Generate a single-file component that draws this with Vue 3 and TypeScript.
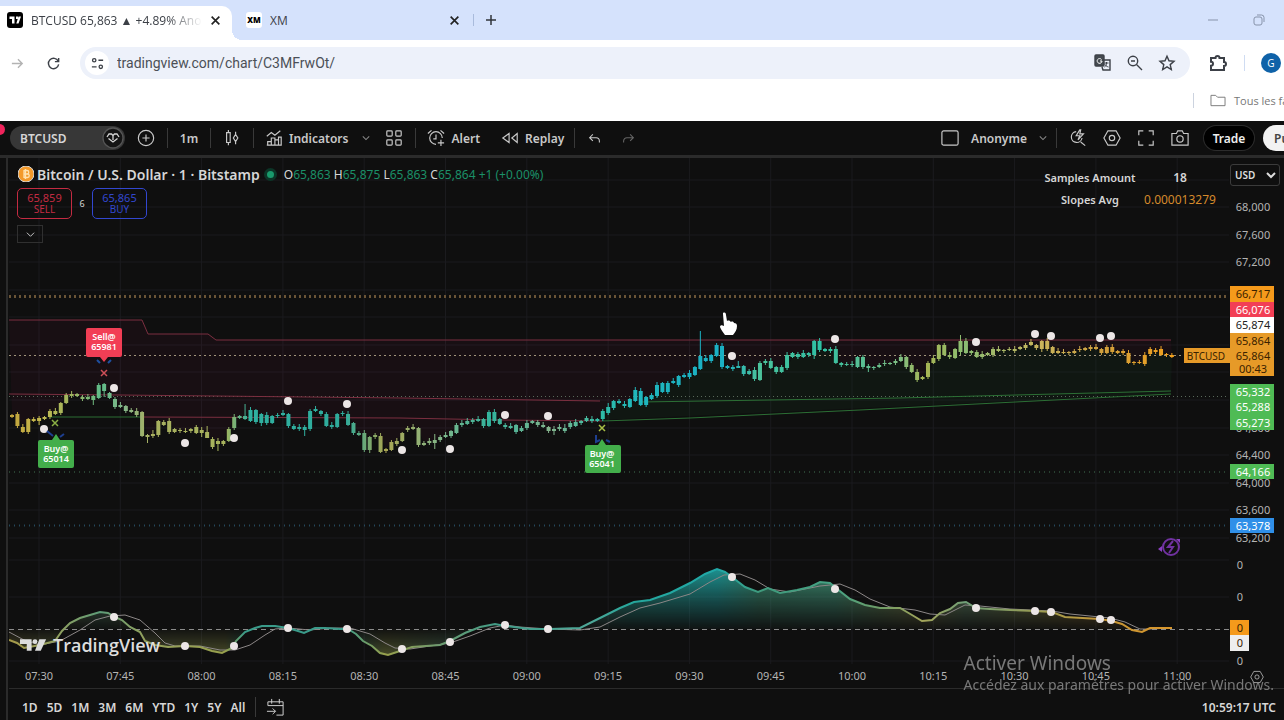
<script setup lang="ts">
import { ref } from 'vue'

type Body = [top: number, bottom: number]

const address = ref('tradingview.com/chart/C3MFrwOt/')
const currency = ref('USD')

const ranges = ['1D', '5D', '1M', '3M', '6M', 'YTD', '1Y', '5Y', 'All']

const hours = [
  '07:30', '07:45', '08:00', '08:15', '08:30', '08:45', '09:00', '09:15',
  '09:30', '09:45', '10:00', '10:15', '10:30', '10:45', '11:00',
].map((label, i) => ({ label, x: 39 + i * 81.3 }))

const gridRows = [180, 207, 235, 262, 290, 317, 345, 372, 400, 428, 455, 483, 510, 538, 560, 597, 661]

const prices = [
  { label: '68,000', y: 207 }, { label: '67,600', y: 235 }, { label: '67,200', y: 262 },
  { label: '64,800', y: 428 }, { label: '64,400', y: 455 }, { label: '64,000', y: 483 },
  { label: '63,600', y: 510 }, { label: '63,200', y: 538 },
  { label: '0', y: 565 }, { label: '0', y: 597 }, { label: '0', y: 661 },
]

const tags = [
  { label: '66,717', y: 286, h: 16, fill: '#f59a1b', ink: '#3a2200' },
  { label: '66,076', y: 302, h: 15, fill: '#f23e55', ink: '#fff' },
  { label: '65,874', y: 317, h: 16, fill: '#ffffff', ink: '#222' },
  { label: '65,864', y: 333, h: 15, fill: '#e69a28', ink: '#3a2200' },
  { label: '65,864', y: 348, h: 14, fill: '#e69a28', ink: '#3a2200' },
  { label: '00:43', y: 361, h: 15, fill: '#e69a28', ink: '#3a2200' },
  { label: '65,332', y: 384, h: 15, fill: '#4fbb55', ink: '#fff' },
  { label: '65,288', y: 399, h: 16, fill: '#4fbb55', ink: '#fff' },
  { label: '65,273', y: 415, h: 15, fill: '#4fbb55', ink: '#fff' },
  { label: '64,166', y: 464, h: 15, fill: '#4fbb55', ink: '#fff' },
  { label: '63,378', y: 518, h: 15, fill: '#2f8fe8', ink: '#fff' },
]

const bodies: Body[] = [
  [415, 417], [414, 426], [427, 432], [419, 432], [419, 421], [418, 421], [417, 419], [411, 417], [411, 414], [403, 413],
  [395, 403], [394, 396], [394, 396], [397, 399], [397, 399], [396, 400], [385, 398], [384, 391], [393, 398], [399, 407],
  [405, 407], [406, 411], [410, 412], [411, 415], [412, 436], [435, 437], [434, 436], [421, 435], [422, 425], [421, 432],
  [429, 432], [430, 431], [431, 432], [429, 431], [427, 433], [430, 433], [432, 438], [439, 447], [441, 444], [441, 444],
  [429, 441], [417, 428], [416, 418], [416, 419], [410, 421], [410, 422], [414, 423], [415, 423], [416, 423], [415, 416],
  [413, 415], [414, 426], [426, 429], [427, 429], [427, 430], [411, 429], [409, 411], [411, 414], [414, 426], [425, 427],
  [414, 427], [413, 414], [414, 425], [423, 433], [433, 435], [433, 450], [437, 450], [435, 437], [436, 452], [449, 451],
  [442, 450], [441, 444], [433, 441], [428, 430], [427, 429], [428, 445], [443, 445], [441, 443], [440, 443], [437, 440],
  [435, 437], [431, 436], [425, 433], [423, 425], [421, 424], [420, 422], [419, 421], [419, 426], [412, 426], [412, 421],
  [419, 424], [425, 427], [426, 428], [425, 432], [428, 431], [423, 428], [421, 423], [422, 425], [425, 427], [427, 431],
  [429, 431], [427, 429], [428, 431], [423, 427], [422, 426], [421, 423], [418, 421], [419, 421], [419, 421], [411, 419],
  [407, 413], [401, 408], [401, 403], [404, 406], [399, 407], [390, 401], [391, 405], [397, 405], [395, 399], [385, 396],
  [383, 392], [383, 392], [381, 383], [376, 385], [375, 377], [373, 377], [367, 375], [356, 369], [358, 361], [355, 361],
  [345, 356], [346, 367], [366, 368], [367, 369], [366, 368], [366, 374], [371, 374], [370, 379], [363, 380], [361, 363],
  [361, 368], [367, 372], [367, 372], [355, 368], [353, 357], [354, 357], [353, 357], [353, 355], [341, 355], [341, 350],
  [349, 351], [349, 351], [349, 363], [363, 365], [364, 365], [364, 365], [357, 367], [357, 367], [366, 368], [367, 368],
  [365, 367], [363, 364], [363, 364], [361, 363], [357, 361], [357, 367], [365, 372], [372, 380], [377, 379], [363, 377],
  [358, 363], [345, 359], [345, 355], [355, 357], [349, 358], [341, 352], [341, 353], [351, 353], [352, 357], [354, 357],
  [353, 355], [349, 355], [349, 351], [350, 351], [349, 350], [349, 351], [347, 349], [345, 348], [342, 345], [345, 348],
  [341, 349], [341, 349], [347, 353], [351, 353], [352, 353], [352, 353], [351, 353], [349, 350], [348, 350], [347, 349],
  [347, 349], [349, 353], [347, 353], [347, 352], [351, 353], [351, 353], [353, 363], [362, 363], [362, 363], [355, 364],
  [349, 354], [350, 352], [349, 355], [354, 355], [355, 357],
]

const longWicks: Record<number, Body> = {
  5: [416, 425], 15: [395, 405], 17: [383, 397], 25: [434, 443], 26: [430, 438], 35: [427, 437], 36: [426, 438],
  38: [438, 451], 43: [404, 420], 46: [413, 426], 54: [425, 436], 66: [436, 453], 78: [434, 449], 84: [418, 425],
  100: [426, 435], 102: [424, 433], 110: [403, 415], 115: [387, 402], 127: [331, 370], 134: [361, 368], 138: [361, 381],
  175: [335, 355], 158: [364, 372], 190: [340, 352], 193: [348, 354], 210: [347, 356], 148: [340, 359],
}

const candles = bodies.map(([top, bottom], i) => {
  const [high, low] = longWicks[i] ?? [top - 1 - (i % 3), bottom + 1 + (i % 2)]
  return { x: 12 + i * 5.42, top, height: bottom - top, high, low }
})

const momentum =
  '9,640 17,643 24,648 40,645 55,641 62,631 70,623 80,618 90,615 100,612 108,613 115,617 122,620 130,627 140,632 145,641 155,645 168,647 185,646 200,647 212,651 222,653 232,648 236,641 245,632 255,628 262,626 275,626 288,628 298,631 304,633 315,628 325,628 340,629 348,629 356,634 363,641 372,646 380,653 388,655 400,651 412,647 440,645 450,641 465,633 480,627 495,624 505,626 530,629 550,629 580,628 600,618 620,608 634,602 650,600 670,593 690,583 705,574 717,569 725,572 732,577 745,587 758,592 768,588 780,593 797,590 810,587 820,582 830,583 836,588 850,599 865,605 880,608 900,608 912,615 922,621 932,620 940,613 950,609 958,603 966,602 976,608 990,609 1010,610 1035,611 1052,612 1065,617 1100,619 1112,621 1122,624 1132,630 1142,632 1150,628 1172,628'
const signal =
  '9,632 24,640 40,645 60,641 80,630 95,620 110,616 125,615 140,620 155,633 165,643 175,646 200,646 220,650 235,650 250,645 265,635 275,629 288,628 310,630 330,628 350,628 370,634 385,643 395,648 410,649 450,643 470,636 490,628 505,625 520,627 548,629 580,630 600,627 620,617 640,608 660,603 690,594 710,582 724,575 740,574 755,580 770,589 790,592 820,586 840,584 855,590 870,599 890,607 915,610 930,614 945,615 955,610 965,605 980,606 1010,609 1052,611 1070,614 1110,618 1125,622 1140,629 1150,629 1172,628'

const priceDots = [
  [44, 429], [114, 388], [185, 443], [234, 438], [288, 401], [347, 404], [402, 450], [450, 449], [505, 415], [548, 416],
  [732, 356], [835, 339], [976, 342], [1035, 334], [1051, 336], [1100, 338], [1111, 336],
]
const momentumDots = [
  [114, 617], [185, 646], [234, 646], [288, 628], [347, 629], [402, 649], [450, 642], [505, 625], [548, 629], [732, 577],
  [835, 589], [976, 608], [1035, 611], [1051, 612], [1100, 619], [1111, 620],
]

const toStops = (pairs: [number, string][]) => pairs.map(([x, color]) => ({ offset: (x - 12) / 1160, color }))

const candleHues = toStops([
  [12, '#c2a43c'], [40, '#c4b84e'], [75, '#9bb562'], [100, '#5fbb88'], [125, '#86b688'], [150, '#a9b060'], [225, '#a7b35c'],
  [250, '#2fb0a0'], [345, '#2fac9c'], [385, '#a9a552'], [440, '#84b789'], [490, '#31b39d'], [550, '#86b48c'], [600, '#2fbba6'],
  [640, '#1fb6bd'], [722, '#1aafc4'], [760, '#4cc29b'], [820, '#2fc0a4'], [900, '#7fbf83'], [925, '#a8b453'], [965, '#8abd72'],
  [1040, '#c9b45c'], [1100, '#cfa03e'], [1172, '#f2a01d'],
])
const momentumHues = toStops([
  [12, '#a59a4a'], [60, '#8fa060'], [100, '#5d9c78'], [145, '#93a05c'], [225, '#98a04c'], [245, '#3a9c8a'], [345, '#3a9a8a'],
  [385, '#98a04c'], [440, '#6d9c70'], [500, '#3f9c88'], [590, '#4fa898'], [630, '#26a79c'], [717, '#20a9a8'], [760, '#3f9a7c'],
  [835, '#46a384'], [880, '#6f9c66'], [925, '#a5a55a'], [965, '#6f9f78'], [1040, '#9c9c50'], [1100, '#c49638'], [1172, '#d9962a'],
])
</script>

<template>
  <div class="window">
    <header class="browser">
      <div class="tabs">
        <div class="tab active">
          <svg class="favicon" viewBox="0 0 16 16" aria-hidden="true">
            <rect width="16" height="16" rx="3" fill="#000" />
            <path d="M2.5 4.5h5v7H5V7H2.5zM9 4.5h2V7H9zM11.5 4.5H14l-2.5 7H9.3z" fill="#fff" />
          </svg>
          <span class="tab-title">BTCUSD 65,863 ▲ +4.89% Anonyme</span>
          <button class="tab-close" aria-label="Close tab">
            <svg viewBox="0 0 10 10"><path d="M1.5 1.5l7 7M8.5 1.5l-7 7" /></svg>
          </button>
        </div>
        <div class="tab idle">
          <span class="xm-icon">XM</span>
          <span class="tab-title">XM</span>
          <button class="tab-close" aria-label="Close tab">
            <svg viewBox="0 0 10 10"><path d="M1.5 1.5l7 7M8.5 1.5l-7 7" /></svg>
          </button>
        </div>
        <button class="new-tab" aria-label="New tab">
          <svg viewBox="0 0 12 12"><path d="M6 1v10M1 6h10" /></svg>
        </button>
        <div class="window-buttons">
          <button aria-label="Minimize"><svg viewBox="0 0 12 12"><path d="M1 6h10" /></svg></button>
          <button aria-label="Restore">
            <svg viewBox="0 0 12 12"><rect x="1" y="3" width="8" height="8" rx="2" /><path d="M4 1h4.5a2.500 2.500 0 0 1 2.500 2.500V8" /></svg>
          </button>
        </div>
      </div>

      <div class="address-row">
        <button class="nav faint" aria-label="Forward">
          <svg viewBox="0 0 16 16"><path d="M2 8h11M8.500 3.500L13 8l-4.500 4.500" /></svg>
        </button>
        <button class="nav" aria-label="Reload">
          <svg viewBox="0 0 16 16"><path d="M13 5.500A5.500 5.500 0 1 0 13.500 9M13.500 2v4h-4" /></svg>
        </button>
        <div class="omnibox">
          <button class="site-info" aria-label="Site information">
            <svg viewBox="0 0 16 16"><circle cx="4.500" cy="4.500" r="1.800" /><path d="M9 4.500h5M2 11.500h5" /><circle cx="11.500" cy="11.500" r="1.800" /></svg>
          </button>
          <input v-model="address" class="url" type="text" aria-label="Address" />
          <button aria-label="Translate">
            <svg viewBox="0 0 18 18"><rect x="1" y="1" width="9" height="11" rx="1" fill="#444a50" /><path d="M8 6h8v10H9l-1-3" /><path d="M10.500 9h4M12.500 8v1c0 2-1 3.500-2 4M11 10.500c1 1.500 2 2 3.500 2.500" stroke-width="1" /><path d="M7.500 5.500A2.400 2.400 0 1 0 8 7H6" stroke="#fff" stroke-width="1" /></svg>
          </button>
          <button aria-label="Zoom">
            <svg viewBox="0 0 18 18"><circle cx="7" cy="7" r="4.700" /><path d="M10.500 10.500l5.500 5.500M5 7h4" /></svg>
          </button>
          <button aria-label="Bookmark this tab">
            <svg viewBox="0 0 18 18"><path d="M9 2.200l2 4.600 5 .5-3.800 3.300 1.100 4.900L9 12.900l-4.300 2.600 1.100-4.900L2 7.300l5-.5z" /></svg>
          </button>
        </div>
        <button class="puzzle" aria-label="Extensions">
          <svg viewBox="0 0 18 18"><path d="M2 4h4.500a2 2 0 0 1 4 0H15v4a2 2 0 0 1 0 4v4H2v-4.200a2 2 0 0 0 0-4z" /></svg>
        </button>
        <span class="thin-rule"></span>
        <button class="avatar" aria-label="Profile">G</button>
      </div>

      <div class="bookmarks">
        <a href="#bookmarks" class="all-bookmarks">
          <svg viewBox="0 0 18 16"><path d="M1.500 2.500h5l2 2h8v9h-15z" /></svg>
          <span>Tous les favoris</span>
        </a>
      </div>
    </header>

    <main class="terminal">
      <nav class="toolbar" aria-label="Chart tools">
        <span class="alert-dot"></span>
        <button class="symbol">
          <span>BTCUSD</span>
          <svg viewBox="0 0 22 22"><circle cx="11" cy="11" r="10" fill="#151515" stroke="#555" /><path d="M5 10l2-3h2.500L11 8.500 12.500 7H15l2 3M6.500 11.500L11 15l4.500-3.500M11 9v4" /></svg>
        </button>
        <button class="tool plus" aria-label="Add symbol">
          <svg viewBox="0 0 20 20"><circle cx="10" cy="10" r="8.500" /><path d="M10 6v8M6 10h8" /></svg>
        </button>
        <i class="rule"></i>
        <button class="tool interval">1m</button>
        <i class="rule"></i>
        <button class="tool style" aria-label="Candles">
          <svg viewBox="0 0 20 20"><path d="M6 1v3M6 15v3M14 3v3M14 14v3M4 4h4v11H4zM16.500 10L14 14l-2.500-4L14 6z" /></svg>
        </button>
        <i class="rule"></i>
        <button class="tool labelled">
          <svg viewBox="0 0 20 20"><path d="M2 8l5-4 4 3 6-5M3 18v-4h4v4zM7 18v-8h4v8M11 18v-6h4v6M15 18V9h3v9H2" /></svg>
          <span>Indicators</span>
        </button>
        <button class="tool chevron" aria-label="Favourite indicators">
          <svg viewBox="0 0 10 10"><path d="M1 3l4 4 4-4" /></svg>
        </button>
        <button class="tool templates" aria-label="Templates">
          <svg viewBox="0 0 20 20"><rect x="2" y="2" width="6" height="6" rx="1" /><rect x="12" y="2" width="6" height="6" rx="1" /><rect x="2" y="12" width="6" height="6" rx="1" /><rect x="12" y="12" width="6" height="6" rx="1" /></svg>
        </button>
        <i class="rule"></i>
        <button class="tool labelled">
          <svg viewBox="0 0 20 20"><path d="M1 5l4-3.500M15 1.500L19 5M17 10a7 7 0 1 0-7 7M10 6v5H7M12 15.500h7M15.500 12v7" /></svg>
          <span>Alert</span>
        </button>
        <button class="tool labelled">
          <svg viewBox="0 0 20 20"><path d="M9 5v10l-7-5zM18 5v10l-6-5z" /></svg>
          <span>Replay</span>
        </button>
        <i class="rule"></i>
        <button class="tool undo" aria-label="Undo">
          <svg viewBox="0 0 16 16"><path d="M6 3L2 7l4 4M2 7h8a4 4 0 0 1 4 4v2" /></svg>
        </button>
        <button class="tool redo" aria-label="Redo">
          <svg viewBox="0 0 16 16"><path d="M10 3l4 4-4 4M14 7H6a4 4 0 0 0-4 4v2" /></svg>
        </button>

        <div class="right-tools">
          <button class="tool layout">
            <svg viewBox="0 0 20 20"><rect x="1" y="2" width="18" height="16" rx="2" /></svg>
            <span>Anonyme</span>
            <svg class="mini" viewBox="0 0 10 10"><path d="M1 3l4 4 4-4" /></svg>
          </button>
          <i class="rule"></i>
          <button class="tool round" aria-label="Quick search">
            <svg viewBox="0 0 20 20"><path d="M8 3a6 6 0 1 0 6.500 7M13 14.500l5 4M12 1L8 7.500h4L10 12l6-6.500h-4l1-4.500z" /></svg>
          </button>
          <button class="tool round" aria-label="Settings">
            <svg viewBox="0 0 20 20"><path d="M5.500 2h9L19 10l-4.500 8h-9L1 10z" /><circle cx="10" cy="10" r="3" /></svg>
          </button>
          <button class="tool round" aria-label="Fullscreen">
            <svg viewBox="0 0 20 20"><path d="M2 7V2h5M13 2h5v5M18 13v5h-5M7 18H2v-5" /></svg>
          </button>
          <button class="tool round" aria-label="Snapshot">
            <svg viewBox="0 0 20 20"><path d="M1 5h5l1.500-3h5L14 5h5v13H1z" /><circle cx="10" cy="11" r="3.500" /></svg>
          </button>
          <button class="trade">Trade</button>
          <button class="publish">Publish</button>
        </div>
      </nav>

      <section class="chart">
        <svg class="plot" viewBox="9 158 1275 530" role="img" aria-label="Bitcoin price chart with momentum pane">
          <defs>
            <linearGradient id="hue" gradientUnits="userSpaceOnUse" x1="12" y1="0" x2="1172" y2="0">
              <stop v-for="(s, i) in candleHues" :key="i" :offset="s.offset" :stop-color="s.color" />
            </linearGradient>
            <linearGradient id="wave" gradientUnits="userSpaceOnUse" x1="12" y1="0" x2="1172" y2="0">
              <stop v-for="(s, i) in momentumHues" :key="i" :offset="s.offset" :stop-color="s.color" />
            </linearGradient>
            <linearGradient id="fade" gradientUnits="userSpaceOnUse" x1="0" y1="565" x2="0" y2="658">
              <stop offset="0" stop-color="#fff" stop-opacity="0.9" />
              <stop offset="0.4" stop-color="#fff" stop-opacity="0.36" />
              <stop offset="0.69" stop-color="#fff" stop-opacity="0.03" />
              <stop offset="1" stop-color="#fff" stop-opacity="0.45" />
            </linearGradient>
            <mask id="glow" maskUnits="userSpaceOnUse" x="9" y="560" width="1170" height="100">
              <rect x="9" y="560" width="1170" height="100" fill="url(#fade)" />
            </mask>
          </defs>

          <g class="grid">
            <line v-for="h in hours" :key="h.label" :x1="h.x" :x2="h.x" y1="158" y2="664" />
            <line v-for="y in gridRows" :key="y" x1="9" x2="1229" :y1="y" :y2="y" />
          </g>

          <polygon class="red-cloud" :points="`9,320 142,320 148,334 208,334 216,340 1171,340 ${candles.slice().reverse().map((c) => `${c.x},${c.top}`).join(' ')}`" />
          <polygon class="green-cloud" :points="`${candles.slice(109).map((c) => `${c.x},${c.top + c.height}`).join(' ')} 1171,394 602,420`" />

          <g class="dotted">
            <line x1="9" x2="1229" y1="296.500" y2="296.500" stroke="#6a5436" stroke-width="3" stroke-dasharray="2 3" />
            <line x1="9" x2="1183" y1="355.500" y2="355.500" stroke="#a0937a" stroke-dasharray="2 3" />
            <line x1="9" x2="1229" y1="396.500" y2="396.500" stroke="#59695a" stroke-dasharray="1 3" />
            <line x1="9" x2="1229" y1="472" y2="472" stroke="#284030" stroke-width="2" stroke-dasharray="1 4" />
            <line x1="9" x2="1229" y1="525.500" y2="525.500" stroke="#25485a" stroke-width="2" stroke-dasharray="1 4" />
          </g>

          <g class="levels">
            <polyline class="red" points="9,320 142,320 148,334 208,334 216,340 1171,340" />
            <polyline class="red" points="9,394 120,395 400,398 600,401" />
            <polyline class="red" points="143,417 400,418 500,420 602,421" />
            <polyline class="green" points="50,417 143,417" />
            <polyline class="green" points="640,402 900,398 1171,391" />
            <polyline class="green" points="602,421 690,418 860,410 1171,394" />
          </g>

          <g fill="url(#hue)">
            <g v-for="(c, i) in candles" :key="i">
              <rect :x="c.x - 0.5" :y="c.high" width="1" :height="c.low - c.high" />
              <rect :x="c.x - 2" :y="c.top" width="4" :height="c.height" />
            </g>
          </g>

          <circle v-for="([x, y], i) in priceDots" :key="i" :cx="x" :cy="y" r="4" class="dot" />

          <g class="marker">
            <path d="M88 328h32a2 2 0 0 1 2 2v25a2 2 0 0 1-2 2h-12l-4 5-4-5H88a2 2 0 0 1-2-2v-25a2 2 0 0 1 2-2z" fill="#f23e55" />
            <path d="M97 360l3 3M111 360l-3 3" stroke="#1e4fa0" stroke-width="2" />
            <path d="M101 370l6 6M107 370l-6 6" stroke="#cf5058" stroke-width="1.500" />
            <text x="104" y="340">Sell@</text>
            <text x="104" y="350">65981</text>
          </g>
          <g class="marker">
            <path d="M40 440h12l4-6 4 6h12a2 2 0 0 1 2 2v24a2 2 0 0 1-2 2H40a2 2 0 0 1-2-2v-24a2 2 0 0 1 2-2z" fill="#43ae4b" />
            <path d="M47 431l6 5M64 434l-4 3" stroke="#1e3f90" stroke-width="2" />
            <path d="M52 420l6 6M58 420l-6 6" stroke="#8ab045" stroke-width="1.500" />
            <text x="56" y="452">Buy@</text>
            <text x="56" y="462">65014</text>
          </g>
          <g class="marker">
            <path d="M587 445h11l4-6 4 6h13a2 2 0 0 1 2 2v24a2 2 0 0 1-2 2h-32a2 2 0 0 1-2-2v-24a2 2 0 0 1 2-2z" fill="#43ae4b" />
            <path d="M596 435v7l4-2M606 440l4 2" stroke="#1e3f90" stroke-width="2" />
            <path d="M599 425l6 6M605 425l-6 6" stroke="#a9c045" stroke-width="1.500" />
            <text x="602" y="457">Buy@</text>
            <text x="602" y="467">65041</text>
          </g>

          <polygon :points="`9,629 ${momentum} 1172,629`" fill="url(#wave)" mask="url(#glow)" />
          <line class="zero" x1="9" x2="1229" y1="629.500" y2="629.500" />
          <polyline class="signal" :points="signal" />
          <polyline class="momentum" :points="momentum" />
          <circle v-for="([x, y], i) in momentumDots" :key="'m' + i" :cx="x" :cy="y" r="4" class="dot" />

          <g class="spark">
            <circle cx="1171" cy="547" r="8" />
            <path d="M1173 541l-5 6h5l-4 6" />
            <path d="M1158 549l4-3v6zM1176 539h4v4z" class="solid" />
          </g>

          <g class="scale">
            <text v-for="(p, i) in prices" :key="i" :x="p.label === '0' ? 1240 : 1253" :y="p.y + 4">{{ p.label }}</text>
            <g v-for="(t, i) in tags" :key="'t' + i">
              <rect x="1230" :y="t.y" width="44" :height="t.h" :fill="t.fill" />
              <text x="1253" :y="t.y + 12" :style="{ fill: t.ink }">{{ t.label }}</text>
            </g>
            <rect x="1184" y="348" width="46" height="15" fill="#e69a28" />
            <text x="1206" y="360" class="dark small">BTCUSD</text>
            <rect x="1230" y="620" width="19" height="15" fill="#f59a1b" />
            <text x="1240" y="632" class="dark">0</text>
            <rect x="1230" y="635" width="19" height="16" fill="#eee" />
            <text x="1240" y="647" class="dark">0</text>
            <text v-for="h in hours" :key="h.label" :x="h.x" y="680">{{ h.label }}</text>
          </g>

          <path class="hand" d="M723 313c2-1 3 0 3 2l1 6c2-1 3 0 4 1 1-1 3 0 3 1 2 0 3 1 3 3 0 4-2 6-4 9h-8c-2-3-4-5-5-8 0-2 2-2 4-1l-1-12z" />
        </svg>

        <div class="legend">
          <svg class="coin" viewBox="0 0 16 16" aria-hidden="true"><circle cx="8" cy="8" r="8" fill="#f39a2b" /><path d="M6 4v8M6 4.500h3a1.700 1.700 0 0 1 0 3.500H6h3.500a1.700 1.700 0 0 1 0 3.500H6M7.500 3v10" fill="none" stroke="#ffe2b0" stroke-width="1.300" /></svg>
          <h1>Bitcoin / U.S. Dollar · 1 · Bitstamp</h1>
          <span class="status"></span>
          <p>O<b>65,863</b> H<b>65,875</b> L<b>65,863</b> C<b>65,864</b> <b>+1 (+0.00%)</b></p>
        </div>
        <div class="orders">
          <button class="sell">65,859<span>SELL</span></button>
          <span class="spread">6</span>
          <button class="buy">65,865<span>BUY</span></button>
        </div>
        <button class="collapse" aria-label="Collapse legend">
          <svg viewBox="0 0 10 10"><path d="M1 3l4 4 4-4" /></svg>
        </button>

        <table class="stats">
          <tbody>
            <tr><th scope="row">Samples Amount</th><td>18</td></tr>
            <tr><th scope="row">Slopes Avg</th><td class="orange">0.000013279</td></tr>
          </tbody>
        </table>

        <select v-model="currency" class="currency" aria-label="Price currency">
          <option>USD</option>
          <option>EUR</option>
        </select>

        <div class="brand">
          <svg viewBox="0 0 30 16" aria-hidden="true"><path d="M0 2h12v12H7V7H0z" /><circle cx="15.500" cy="4.500" r="2.500" /><path d="M20 2h7l-5.500 12h-6z" /></svg>
          <span>TradingView</span>
        </div>
        <button class="axis-settings" aria-label="Scale settings">
          <svg viewBox="0 0 20 20"><path d="M5.500 2h9L19 10l-4.500 8h-9L1 10z" /><circle cx="10" cy="10" r="3" /></svg>
        </button>
      </section>

      <footer class="ranges">
        <button v-for="r in ranges" :key="r">{{ r }}</button>
        <i class="rule"></i>
        <button class="goto" aria-label="Go to date">
          <svg viewBox="0 0 20 20"><path d="M2 8V4h16v14h-7M2 8h16M6 1v5M14 1v5M1 14h9M7 11l3 3-3 3" /></svg>
        </button>
        <button class="clock">10:59:17 UTC</button>
      </footer>
    </main>

    <aside class="activation">
      <h2>Activer Windows</h2>
      <p>Accédez aux paramètres pour activer Windows.</p>
    </aside>
  </div>
</template>

<style>
body {
  background: #0f0f0f;
}
</style>

<style scoped>
.window {
  position: relative;
  overflow: hidden;
  min-height: 100vh;
  background: #0f0f0f;
  color: #d6d6d6;
  font-family: "Noto Sans", "Open Sans", sans-serif;
  font-size: 12px;
}
button {
  display: flex;
  align-items: center;
  justify-content: center;
  padding: 0;
  border: 0;
  background: none;
  color: inherit;
  font: inherit;
}
svg {
  display: block;
  fill: none;
  stroke: currentColor;
}

/* Browser chrome */
.browser {
  height: 121px;
  background: #fff;
  color: #3c4047;
  font-family: "Open Sans", sans-serif;
}
.tabs {
  display: flex;
  align-items: center;
  height: 40px;
  background: #d5e2fc;
}
.tab {
  display: flex;
  align-items: center;
  gap: 8px;
}
.tab.active {
  position: relative;
  align-self: flex-end;
  width: 232px;
  height: 34px;
  box-sizing: border-box;
  padding: 0 11px 6px 7px;
  border-radius: 0 10px 0 0;
  background: #fff;
}
.tab.active::after {
  position: absolute;
  bottom: 0;
  left: 100%;
  width: 10px;
  height: 10px;
  background: radial-gradient(circle at 100% 0, #d5e2fc 10px, #fff 10px);
  content: "";
}
.favicon {
  width: 16px;
  height: 16px;
  stroke: none;
}
.tab-title {
  flex: 1;
  overflow: hidden;
  white-space: nowrap;
}
.tab.active .tab-title {
  -webkit-mask-image: linear-gradient(90deg, #000 80%, transparent);
  mask-image: linear-gradient(90deg, #000 80%, transparent);
}
.tab-close svg {
  width: 11px;
  height: 11px;
  stroke: #222;
  stroke-width: 1.5;
}
.tab.idle {
  flex: 0 0 214px;
  margin-left: 14px;
}
.xm-icon {
  width: 16px;
  border-radius: 3px;
  background: #fff;
  color: #000;
  font-size: 8px;
  font-weight: 800;
  line-height: 16px;
  text-align: center;
}
.new-tab {
  margin-left: 13px;
  padding-left: 11px;
  border-left: 1px solid #a9bbdc;
}
.new-tab svg {
  width: 12px;
  height: 12px;
  stroke: #30343a;
  stroke-width: 1.5;
}
.window-buttons {
  display: flex;
  gap: 34px;
  margin-left: auto;
  padding-right: 19px;
}
.window-buttons svg {
  width: 12px;
  height: 12px;
  stroke: #8793aa;
}
.address-row {
  display: flex;
  align-items: center;
  height: 46px;
  padding-left: 8px;
}
.nav {
  width: 18px;
  margin-right: 18px;
}
.nav svg {
  width: 15px;
  height: 15px;
  stroke-width: 1.5;
}
.nav.faint {
  color: #b3b3b3;
}
.omnibox {
  display: flex;
  flex: 1;
  align-items: center;
  gap: 14px;
  height: 32px;
  padding: 0 14px 0 5px;
  border-radius: 16px;
  background: #edf1fa;
}
.omnibox svg,
.puzzle svg {
  width: 18px;
  height: 18px;
  stroke-width: 1.4;
}
.site-info {
  width: 24px;
  height: 24px;
  border-radius: 50%;
  background: #fff;
}
.omnibox .site-info svg {
  width: 15px;
  height: 15px;
}
.url {
  flex: 1;
  min-width: 0;
  margin-left: -8px;
  border: 0;
  outline: 0;
  background: none;
  color: #4b5057;
  font: 14px Roboto, "Open Sans", sans-serif;
}
.puzzle {
  margin: 0 17px 0 19px;
}
.puzzle svg {
  stroke-width: 2;
}
.thin-rule {
  width: 1px;
  height: 16px;
  background: #cfdcf2;
}
.avatar {
  width: 20px;
  height: 20px;
  margin: 0 3px 0 16px;
  border-radius: 50%;
  background: #0f62a8;
  color: #fff;
  font-size: 10px;
}
.bookmarks {
  display: flex;
  justify-content: flex-end;
  align-items: center;
  height: 28px;
}
.all-bookmarks {
  display: flex;
  flex: 0 0 75px;
  align-items: center;
  gap: 7px;
  overflow: hidden;
  padding-left: 15px;
  border-left: 1px solid #ccd3df;
  color: #777;
  font-size: 11px;
  text-decoration: none;
  white-space: nowrap;
}
.all-bookmarks svg {
  flex: none;
  width: 18px;
  height: 15px;
}

/* Chart toolbar */
.terminal {
  padding-left: 9px;
  background: linear-gradient(90deg, #0f0f0f 6px, #2b2b2b 6px, #2b2b2b 8px, #0f0f0f 8px);
}
.toolbar {
  position: relative;
  display: flex;
  align-items: center;
  height: 34px;
  margin-left: -9px;
  padding-left: 10px;
  border-bottom: 3px solid #2b2b2b;
  background: #0f0f0f;
  font-size: 12px;
  font-weight: 600;
}
.toolbar svg {
  flex: none;
  width: 18px;
  height: 18px;
  stroke-width: 1.3;
}
.alert-dot {
  position: absolute;
  top: 3px;
  left: -6px;
  width: 11px;
  height: 11px;
  border-radius: 50%;
  background: #f0245c;
}
.symbol {
  justify-content: space-between;
  width: 115px;
  height: 24px;
  padding: 0 1px 0 10px;
  border-radius: 12px;
  background: #373737;
}
.toolbar .symbol svg {
  width: 22px;
  height: 22px;
}
.rule {
  width: 1px;
  height: 20px;
  background: #393939;
}
.tool {
  height: 30px;
  color: #c9c9c9;
}
.plus,
.templates {
  width: 42px;
}
.interval,
.style {
  width: 42px;
}
.labelled {
  gap: 6px;
  padding: 0 10px 0 11px;
}
.chevron {
  width: 15px;
}
.toolbar .chevron svg,
.toolbar .mini {
  width: 8px;
  height: 8px;
  stroke: #888;
}
.undo {
  width: 38px;
}
.redo {
  width: 30px;
  color: #666;
}
.toolbar .undo svg,
.toolbar .redo svg {
  width: 13px;
  height: 13px;
}
.right-tools {
  display: flex;
  align-items: center;
  margin-left: auto;
}
.layout {
  gap: 12px;
  padding-right: 9px;
}
.round {
  width: 34px;
}
.rule + .round {
  margin-left: 4px;
}
.trade {
  width: 50px;
  height: 24px;
  margin: 0 9px 0 7px;
  border-radius: 12px;
  background: #000;
  box-shadow: 0 0 0 1px #2c2c2c;
  color: #eee;
}
.publish {
  justify-content: flex-start;
  width: 21px;
  height: 26px;
  padding-left: 11px;
  border-radius: 13px 0 0 13px;
  background: #f2f2f2;
  color: #444;
  overflow: hidden;
}

/* Chart */
.chart {
  position: relative;
}
.plot {
  width: 100%;
  height: auto;
  stroke: none;
}
.grid line {
  stroke: #1b1b1e;
}
.red-cloud {
  fill: #a02050;
  opacity: 0.07;
}
.green-cloud {
  fill: #28a040;
  opacity: 0.06;
}
.levels polyline {
  fill: none;
}
.levels .red {
  stroke: #7b2f40;
}
.levels .green {
  stroke: #2c6f35;
}
.dot {
  fill: #ece6e6;
}
.marker text {
  fill: #fff;
  font-size: 9px;
  font-weight: 600;
  text-anchor: middle;
}
.zero {
  stroke: #8b8b8b;
  stroke-dasharray: 5 4;
}
.signal {
  fill: none;
  stroke: #8c8787;
}
.momentum {
  fill: none;
  stroke: url(#wave);
  stroke-width: 2;
}
.spark {
  fill: none;
  stroke: #7032a0;
  stroke-width: 2;
}
.spark .solid {
  fill: #8a3fc0;
  stroke: none;
}
.scale text {
  fill: #b4b4b4;
  font-size: 11px;
  text-anchor: middle;
}
.scale .dark {
  fill: #3a2200;
}
.scale .small {
  font-size: 10px;
}
.hand {
  fill: #fff;
}
.legend {
  position: absolute;
  top: 6px;
  left: 9px;
  display: flex;
  align-items: center;
  height: 20px;
}
.coin {
  width: 16px;
  height: 16px;
  margin-right: 3px;
}
.legend h1 {
  margin: 0;
  font-size: 14px;
  font-weight: 600;
}
.status {
  width: 7px;
  height: 7px;
  margin: 0 10px 0 7px;
  border-radius: 50%;
  background: #199a6c;
  box-shadow: 0 0 0 3px #0c3527;
}
.legend p {
  margin: 0;
  font-size: 12px;
}
.legend b {
  color: #1b8f68;
  font-weight: 400;
}
.orders {
  position: absolute;
  top: 30px;
  left: 8px;
  display: flex;
  align-items: center;
  gap: 6px;
}
.orders button {
  flex-direction: column;
  width: 55px;
  height: 31px;
  border: 1px solid;
  border-radius: 5px;
  font-size: 11px;
  line-height: 12px;
}
.orders button span {
  font-size: 10px;
  line-height: 11px;
}
.sell {
  color: #c42b42;
}
.buy {
  color: #3247d0;
}
.spread {
  width: 8px;
  font-size: 9px;
  text-align: center;
}
.collapse {
  position: absolute;
  top: 67px;
  left: 8px;
  width: 26px;
  height: 18px;
  border: 1px solid #303030;
}
.collapse svg {
  width: 9px;
  height: 9px;
}
.stats {
  position: absolute;
  top: 9px;
  right: 60px;
  border-collapse: collapse;
  font-size: 12px;
  line-height: 22px;
  white-space: nowrap;
}
.stats th,
.stats td {
  padding: 0;
  font-weight: 600;
  text-align: center;
}
.stats th {
  width: 92px;
  font-size: 11px;
}
.stats td {
  width: 88px;
}
.stats .orange {
  color: #d58a2c;
  font-weight: 400;
}
.currency {
  position: absolute;
  top: 6px;
  right: 4px;
  width: 50px;
  height: 22px;
  border: 1px solid #3b3b3b;
  border-radius: 3px;
  background: #0f0f0f;
  color: #ddd;
  font: 600 10px "Noto Sans", sans-serif;
}
.brand {
  position: absolute;
  bottom: 31px;
  left: 11px;
  display: flex;
  align-items: center;
  gap: 4px;
  color: #ddd;
  font: 600 18px/24px "Open Sans", sans-serif;
}
.brand svg {
  width: 29px;
  height: 16px;
  fill: #ddd;
  stroke: none;
}
.axis-settings {
  position: absolute;
  right: 20px;
  bottom: 4px;
}
.axis-settings svg {
  width: 14px;
  height: 14px;
}
.ranges {
  display: flex;
  align-items: center;
  gap: 9px;
  height: 32px;
  padding: 5px 8px 0 13px;
  box-sizing: border-box;
  border-top: 1px solid #2b2b2b;
  font-size: 12px;
  font-weight: 600;
}
.ranges .rule {
  margin: 0 1px;
}
.goto svg {
  width: 19px;
  height: 19px;
}
.clock {
  margin-left: auto;
}

.activation {
  position: absolute;
  right: 10px;
  bottom: 25px;
  color: #8b8b8b;
  opacity: 0.85;
  pointer-events: none;
}
.activation h2 {
  margin: 0;
  font-size: 19px;
  font-weight: 400;
  line-height: 24px;
}
.activation p {
  margin: 0;
  font-size: 14px;
  line-height: 20px;
}
</style>
